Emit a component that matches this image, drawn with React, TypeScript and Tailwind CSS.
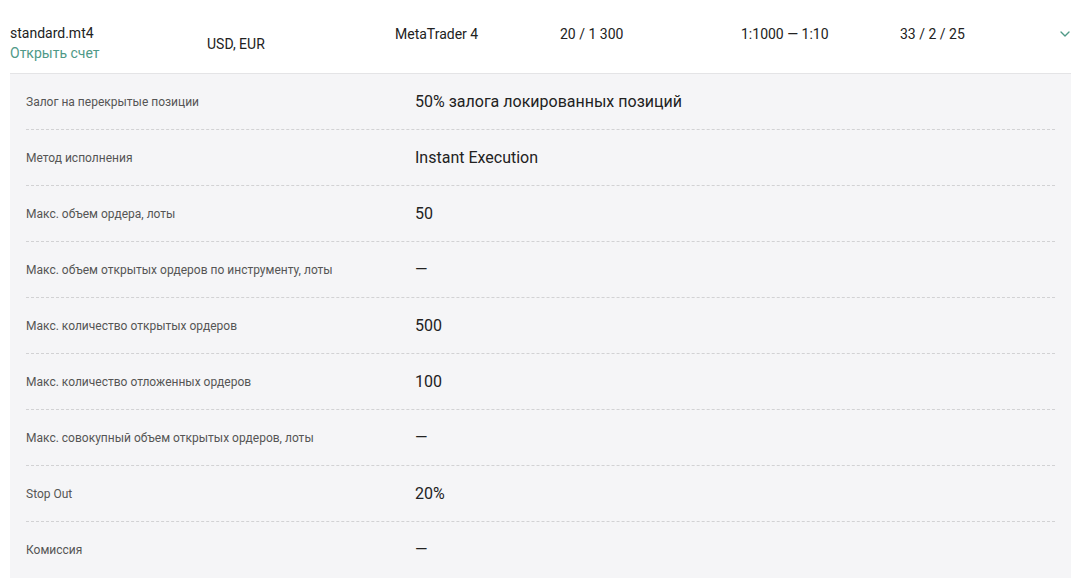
import { ChevronDown } from "lucide-react";

const details: [string, string][] = [
  ["Залог на перекрытые позиции", "50% залога локированных позиций"],
  ["Метод исполнения", "Instant Execution"],
  ["Макс. объем ордера, лоты", "50"],
  ["Макс. объем открытых ордеров по инструменту, лоты", "—"],
  ["Макс. количество открытых ордеров", "500"],
  ["Макс. количество отложенных ордеров", "100"],
  ["Макс. совокупный объем открытых ордеров, лоты", "—"],
  ["Stop Out", "20%"],
  ["Комиссия", "—"],
];

export default function App() {
  return (
    <div className="min-h-[585px] bg-white pl-[10px] pr-[10px] pt-[24px] font-['Roboto',sans-serif] text-[#222]">
      <div className="flex h-[50px] border-b border-[#e4e4e6] text-[14px] leading-[19px]">
        <div className="w-[197px]">
          <div>standard.mt4</div>
          <a href="#" className="mt-[1px] block text-[#4f9987]">Открыть счет</a>
        </div>
        <div className="mt-[11px] w-[188px]">USD, EUR</div>
        <div className="mt-[1px] w-[165px]">MetaTrader 4</div>
        <div className="mt-[1px] w-[181px]">20 / 1 300</div>
        <div className="mt-[1px] w-[159px]">1:1000 — 1:10</div>
        <div className="mt-[1px] flex-1">33 / 2 / 25</div>
        <ChevronDown className="mr-[-2px] mt-[2px] h-[16px] w-[16px] text-[#4f9987]" strokeWidth={2} />
      </div>
      <div className="bg-[#f5f5f7] px-[16px]">
        {details.map(([label, value], i) => (
          <div
            key={label}
            className={
              "flex h-[56px] items-center " +
              (i < details.length - 1 ? "border-b border-dashed border-[#d2d2d4]" : "")
            }
          >
            <div className="w-[389px] text-[12px] text-[#555]">{label}</div>
            <div className="text-[16px] text-[#222]">{value}</div>
          </div>
        ))}
      </div>
    </div>
  );
}
